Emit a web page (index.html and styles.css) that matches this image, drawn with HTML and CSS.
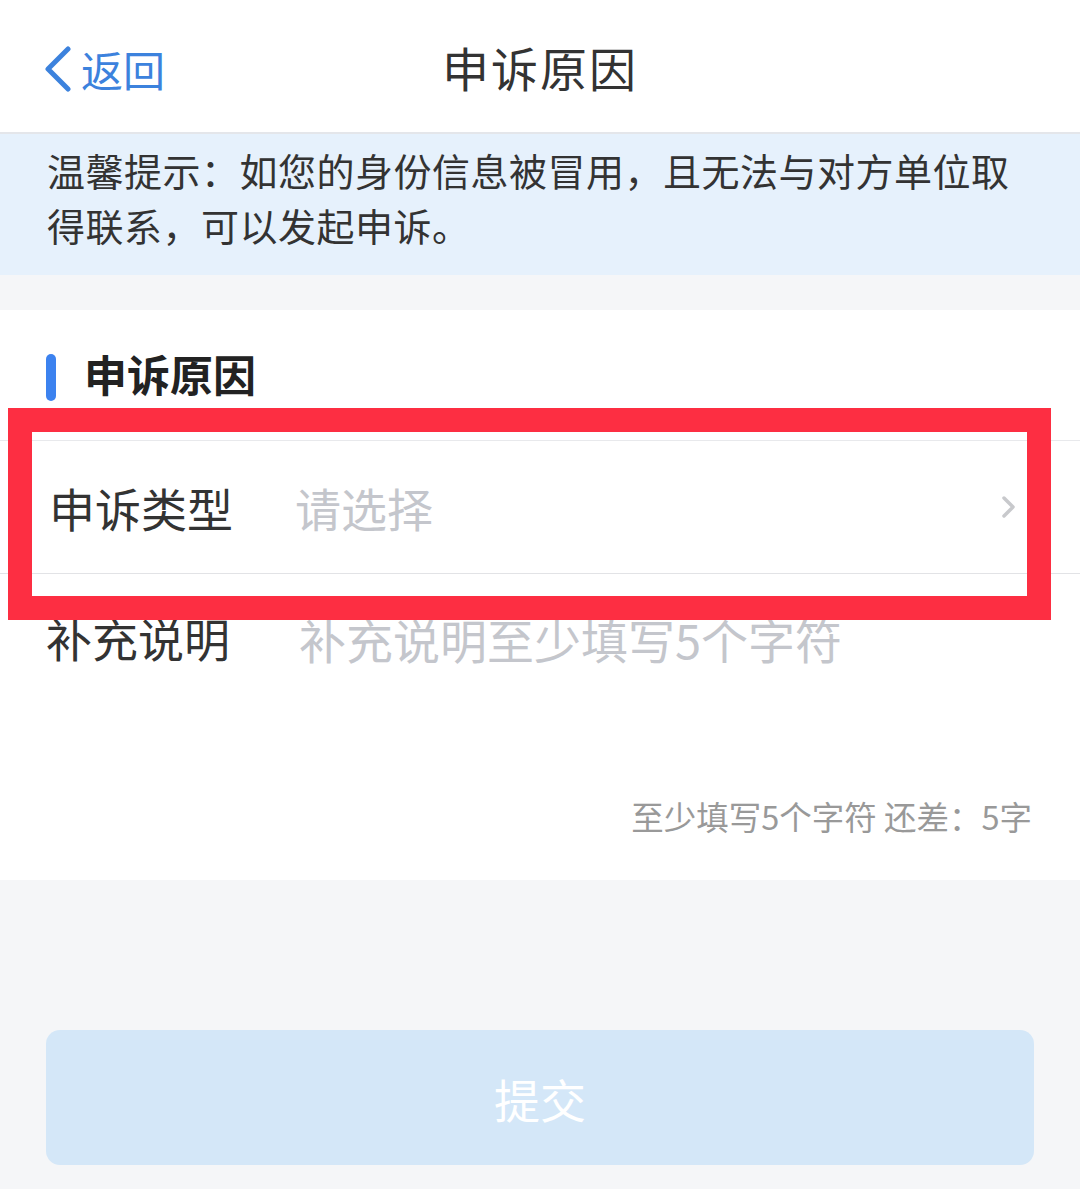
FILE: index.html
```html
<!DOCTYPE html>
<html lang="zh-CN">
<head>
  <meta charset="UTF-8">
  <title>申诉原因</title>
  <link rel="stylesheet" href="styles.css">
</head>
<body>

  <header class="top-bar">
    <a class="back" href="#">
      <svg width="30" height="46" viewBox="0 0 30 46"><polyline points="25,3 5,23 25,43" fill="none" stroke="#3c82dd" stroke-width="5" stroke-linecap="round" stroke-linejoin="round"/></svg>
      <span>返回</span>
    </a>
    <h1>申诉原因</h1>
  </header>

  <section class="notice">
    温馨提示：如您的身份信息被冒用，且无法与对方单位取得联系，可以发起申诉。
  </section>

  <section class="form-card">
    <h2 class="section-title">申诉原因</h2>

    <div class="row row-select">
      <span class="label">申诉类型</span>
      <span class="placeholder">请选择</span>
      <svg class="arrow" width="16" height="24" viewBox="0 0 16 24"><polyline points="3,3 12,12 3,21" fill="none" stroke="#c8c9cc" stroke-width="3.5" stroke-linecap="round" stroke-linejoin="round"/></svg>
    </div>

    <div class="row row-text">
      <span class="label">补充说明</span>
      <span class="placeholder">补充说明至少填写5个字符</span>
    </div>
    <div class="counter">至少填写5个字符 还差：5字</div>

    <!-- 标注框 -->
    <div class="mark"></div>
  </section>

  <div class="actions">
    <button class="submit">提交</button>
  </div>

</body>
</html>
```

FILE: styles.css
```css
body {
  margin: 0;
  width: 1080px;
  min-height: 1189px;
  background-color: #f5f6f8;
  font-family: "Noto Sans CJK SC", "Noto Sans", sans-serif;
  color: #333;
}
.top-bar {
  position: relative;
  height: 132px;
  background-color: #fff;
  border-bottom: 2px solid #e4e6ea;
  display: flex;
  align-items: center;
  justify-content: center;
}
.top-bar h1 {
  margin: 0;
  font-size: 47px;
  font-weight: 400;
  color: #333;
  letter-spacing: 2px;
}
.back {
  position: absolute;
  left: 43px;
  top: 46px;
  display: flex;
  align-items: center;
  gap: 8px;
  color: #3c82dd;
  text-decoration: none;
  font-size: 42px;
  line-height: 46px;
}
.notice {
  background-color: #e6f1fc;
  padding: 8px 58px 22px 47px;
  font-size: 38px;
  letter-spacing: 0.5px;
  line-height: 55px;
  color: #333;
  height: 111px;
}
.form-card {
  position: relative;
  margin-top: 35px;
  background-color: #fff;
  height: 570px;
}
.section-title {
  margin: 0;
  height: 130px;
  display: flex;
  align-items: center;
  padding-left: 84px;
  position: relative;
  font-size: 43px;
  font-weight: 700;
  color: #222;
  box-sizing: border-box;
  padding-bottom: 4px;
}
.section-title::before {
  content: "";
  position: absolute;
  left: 46px;
  top: 44px;
  width: 10px;
  height: 47px;
  border-radius: 5px;
  background-color: #3c82ef;
}
.row {
  display: flex;
  font-size: 46px;
  margin-left: 46px;
}
.row .label {
  color: #333;
}
.placeholder {
  color: #c4c6cc;
}
.row-select {
  height: 132px;
  align-items: center;
  border-top: 1px solid #e8e9ec;
  border-bottom: 1px solid #e2e3e6;
  margin-left: 0;
  padding-left: 49px;
  padding-right: 63px;
  position: relative;
}
.row-select .label {
  width: 246px;
}
.row-select .arrow {
  margin-left: auto;
}
.row-text {
  padding-top: 30px;
  height: 170px;
}
.row-text .label {
  width: 253px;
}
.row-text .placeholder {
  font-size: 47px;
}
.counter {
  text-align: right;
  padding-right: 48px;
  padding-top: 22px;
  font-size: 32.5px;
  color: #999;
  line-height: 40px;
}
.mark {
  position: absolute;
  left: 8px;
  top: 98px;
  width: 1043px;
  height: 212px;
  border: 24px solid #fd2e42;
  box-sizing: border-box;
}
.actions {
  padding: 150px 46px 0 46px;
}
.submit {
  width: 100%;
  height: 135px;
  border: none;
  border-radius: 14px;
  background-color: #d4e7f8;
  color: #fff;
  font-family: "Noto Sans CJK SC", sans-serif;
  font-size: 46px;
}
```
